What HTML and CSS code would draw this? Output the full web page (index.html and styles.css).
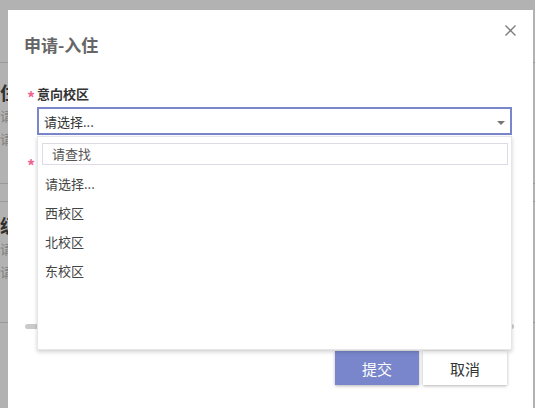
FILE: index.html
```html
<!DOCTYPE html>
<html lang="zh-CN">
<head>
  <meta charset="UTF-8">
  <meta name="viewport" content="width=device-width, initial-scale=1.0">
  <title>申请-入住</title>
  <link rel="stylesheet" href="styles.css">
</head>
<body>
  <div class="page">
    <div class="page-head"></div>
    <div class="page-item">
      <h3>住宿申请</h3>
      <p>请填写申请信息</p>
      <p>请等待审核结果</p>
    </div>
    <div class="page-item second">
      <h3>级别调整</h3>
      <p>请填写申请信息</p>
      <p>请等待审核结果</p>
    </div>
  </div>

  <div class="mask"></div>

  <div class="modal">
    <button class="close" title="关闭">
      <svg width="11" height="11" viewBox="0 0 11 11"><path d="M0.5 0.5L10.5 10.5M10.5 0.5L0.5 10.5" stroke="#7a7a7a" stroke-width="1.3" fill="none"/></svg>
    </button>
    <h2 class="modal-title">申请-入住</h2>

    <div class="field">
      <span class="req">*</span>
      <label class="label">意向校区</label>
      <div class="select-wrap">
        <div class="select"><span>请选择...</span><i class="caret"></i></div>
        <div class="dropdown">
          <div class="search">请查找</div>
          <ul class="options">
            <li>请选择...</li>
            <li>西校区</li>
            <li>北校区</li>
            <li>东校区</li>
          </ul>
        </div>
      </div>
    </div>

    <div class="field field-2">
      <span class="req">*</span>
      <label class="label">入住时间</label>
      <div class="box"></div>
    </div>

    <div class="slider"></div>

    <div class="actions">
      <button class="btn primary">提交</button>
      <button class="btn">取消</button>
    </div>
  </div>
</body>
</html>
```

FILE: styles.css
```css
body {
  margin: 0;
  height: 408px;
  overflow: hidden;
  background: #fff;
  font-family: "Noto Sans CJK SC", "Noto Sans", sans-serif;
}

/* page behind the dialog */
.page-head {
  height: 62px;
  border-bottom: 1px solid #dcdcdc;
}

.page-item {
  padding: 17px 0 33px;
  border-bottom: 1px solid #dcdcdc;
}

.page-item h3 {
  margin: 0;
  font-size: 18px;
  line-height: 24px;
  font-weight: bold;
  color: #444;
}

.page-item p {
  margin: 0;
  font-size: 13px;
  line-height: 23px;
  color: #b8b8b8;
}

.page-item.second {
  margin-top: 17px;
  border-top: 1px solid #dcdcdc;
  padding: 11px 0 39px;
}

.mask {
  position: fixed;
  inset: 0;
  background: rgba(0, 0, 0, 0.3);
}

/* dialog */
.modal {
  position: fixed;
  top: 10px;
  left: 8px;
  width: 525px;
  height: 420px;
  box-sizing: border-box;
  padding: 23px 26px 0 0;
  background: #fff;
}

.close {
  position: absolute;
  top: 15px;
  right: 17px;
  width: 11px;
  height: 11px;
  padding: 0;
  border: none;
  background: none;
  display: flex;
  cursor: pointer;
}

.modal-title {
  margin: 0 0 27px 16px;
  font-size: 17px;
  line-height: 24px;
  font-weight: bold;
  color: #666;
}

.field {
  display: grid;
  grid-template-columns: 10px 475px;
  row-gap: 3px;
  padding-left: 19px;
}

.req {
  height: 20px;
  box-sizing: border-box;
  padding-top: 3px;
  color: #f06292;
  font-size: 16px;
  font-weight: bold;
  line-height: 20px;
}

.label {
  font-size: 13px;
  line-height: 20px;
  font-weight: bold;
  color: #333;
}

.select-wrap {
  grid-column: 2;
  position: relative;
}

.select {
  height: 28px;
  box-sizing: border-box;
  border: 2px solid #7986cb;
  display: flex;
  align-items: center;
  padding: 0 5px;
  font-size: 13px;
  color: #333;
}

.caret {
  margin-left: auto;
  margin-top: 3px;
  border-left: 4.5px solid transparent;
  border-right: 4.5px solid transparent;
  border-top: 4px solid #777;
}

.dropdown {
  position: absolute;
  top: calc(100% + 1px);
  left: 0;
  right: 0;
  height: 214px;
  box-sizing: border-box;
  padding: 6px 3px 0 4px;
  background: #fff;
  border: 1px solid #e6e6e6;
  box-shadow: 0 2px 4px rgba(0, 0, 0, 0.18);
  z-index: 2;
}

.search {
  height: 22px;
  box-sizing: border-box;
  border: 1px solid #dedbe6;
  padding-left: 9px;
  font-size: 13px;
  line-height: 20px;
  color: #555;
}

.options {
  list-style: none;
  margin: 4px 0 0;
  padding: 0;
}

.options li {
  height: 29px;
  line-height: 29px;
  padding-left: 3px;
  font-size: 13px;
  color: #444;
}

.field-2 {
  margin-top: 17px;
}

.box {
  grid-column: 2;
  height: 100px;
  border: 1px solid #ddd;
  box-sizing: border-box;
}

.slider {
  margin: 49px 0 0 17px;
  width: 489px;
  height: 5px;
  border-radius: 3px;
  background: #cacaca;
}

.actions {
  display: flex;
  justify-content: flex-end;
  gap: 4px;
  margin-top: 22px;
}

.btn {
  width: 84px;
  height: 34px;
  border: none;
  background: #fff;
  color: #333;
  font-family: inherit;
  font-size: 15px;
  box-shadow: 0 1px 3px rgba(0, 0, 0, 0.3);
  cursor: pointer;
}

.btn.primary {
  background: #7986cb;
  color: #fff;
}
```
